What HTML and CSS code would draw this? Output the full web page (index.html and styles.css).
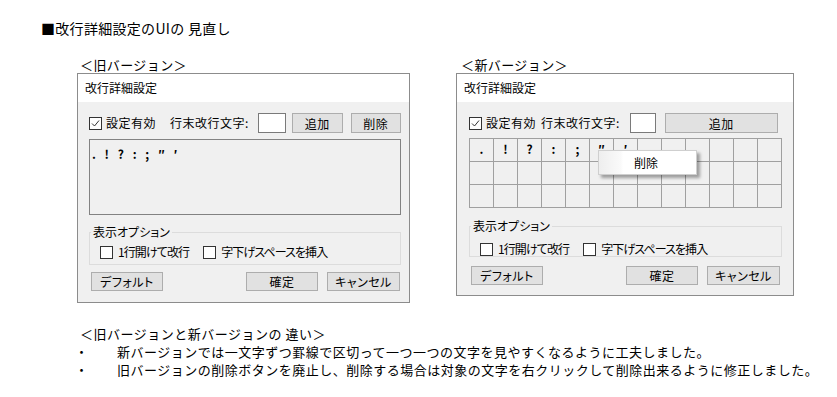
FILE: index.html
```html
<!DOCTYPE html>
<html lang="ja">
<head>
<meta charset="UTF-8" />
<title>改行詳細設定のUIの見直し</title>
<link rel="stylesheet" href="styles.css">
</head>
<body>
<h1 class="page-title">■改行詳細設定のUIの 見直し</h1>

<div class="compare">
  <!-- old version -->
  <section class="version version-old">
    <div class="caption">＜旧バージョン＞</div>
    <div class="dialog">
      <div class="dialog-title">改行詳細設定</div>
      <div class="dialog-body">
        <div class="top-row">
          <span class="check check-main">
            <span class="box"><svg viewBox="0 0 11 11" width="11" height="11"><path d="M2 5.5 L4.5 8 L9 2.5" fill="none" stroke="#333" stroke-width="1"/></svg></span>
            設定有効
          </span>
          <span class="field-label">行末改行文字:</span>
          <span class="input"></span>
          <button class="btn btn-add">追加</button>
          <button class="btn btn-del">削除</button>
        </div>
        <div class="char-area">. ! ? : ; ″ ′</div>
        <fieldset class="group">
          <legend>表示オプション</legend>
          <span class="check"><span class="box"></span>1行開けて改行</span>
          <span class="check check-2"><span class="box"></span>字下げスペースを挿入</span>
        </fieldset>
        <div class="btn-row">
          <button class="btn btn-default">デフォルト</button>
          <button class="btn btn-ok">確定</button>
          <button class="btn btn-cancel">キャンセル</button>
        </div>
      </div>
    </div>
  </section>

  <!-- new version -->
  <section class="version version-new">
    <div class="caption">＜新バージョン＞</div>
    <div class="dialog">
      <div class="dialog-title">改行詳細設定</div>
      <div class="dialog-body">
        <div class="top-row">
          <span class="check check-main">
            <span class="box"><svg viewBox="0 0 11 11" width="11" height="11"><path d="M2 5.5 L4.5 8 L9 2.5" fill="none" stroke="#333" stroke-width="1"/></svg></span>
            設定有効
          </span>
          <span class="field-label">行末改行文字:</span>
          <span class="input"></span>
          <button class="btn btn-add">追加</button>
        </div>
        <div class="char-grid-wrap">
          <div class="char-grid" id="charGrid"></div>
          <div class="context-menu"><span class="menu-item">削除</span></div>
        </div>
        <fieldset class="group">
          <legend>表示オプション</legend>
          <span class="check"><span class="box"></span>1行開けて改行</span>
          <span class="check check-2"><span class="box"></span>字下げスペースを挿入</span>
        </fieldset>
        <div class="btn-row">
          <button class="btn btn-default">デフォルト</button>
          <button class="btn btn-ok">確定</button>
          <button class="btn btn-cancel">キャンセル</button>
        </div>
      </div>
    </div>
  </section>
</div>

<div class="notes">
  <div class="notes-title">＜旧バージョンと新バージョンの 違い＞</div>
  <div class="note"><span class="bullet">・</span>新バージョンでは一文字ずつ罫線で区切って一つ一つの文字を見やすくなるように工夫しました。</div>
  <div class="note"><span class="bullet">・</span>旧バージョンの削除ボタンを廃止し、削除する場合は対象の文字を右クリックして削除出来るように修正しました。</div>
</div>

<script>
  const chars = ['.', '!', '?', ':', ';', '″', '′'];
  const grid = document.getElementById('charGrid');
  for (let i = 0; i < 39; i++) {
    const cell = document.createElement('div');
    cell.className = 'cell';
    cell.textContent = chars[i] || '';
    grid.appendChild(cell);
  }
</script>
</body>
</html>
```

FILE: styles.css
```css
* {
  box-sizing: border-box;
}
body {
  margin: 0;
  font-family: "Noto Sans CJK JP", "Noto Sans", sans-serif;
  color: #000;
  background: #fff;
}
.page-title {
  margin: 0;
  padding: 18px 0 0 41px;
  font-size: 14px;
  font-weight: 400;
  line-height: 20px;
  letter-spacing: 0.3px;
}
.compare {
  display: flex;
  align-items: flex-start;
  gap: 46px;
  margin-top: 19px;
  padding-left: 77px;
}
.caption {
  font-size: 13px;
  line-height: 16px;
  letter-spacing: 0.4px;
  padding-left: 3px;
}
.version-new .caption {
  padding-left: 5px;
}

/* dialog */
.dialog {
  border: 1px solid #8c8c8c;
  background: #f0f0f0;
  font-size: 12px;
  line-height: 16px;
}
.version-old .dialog {
  width: 333px;
}
.version-new .dialog {
  width: 338px;
}
.dialog-title {
  background: #fff;
  height: 28px;
  line-height: 28px;
  padding-left: 7px;
}
.dialog-body {
  padding: 11px 8px 11px 11px;
}
.version-new .dialog-body {
  padding: 11px 11px 10px 12px;
}
.top-row {
  display: flex;
  align-items: center;
  height: 20px;
}
.check {
  display: inline-flex;
  align-items: center;
  gap: 6px;
  letter-spacing: 0.5px;
}
.box {
  width: 13px;
  height: 13px;
  border: 1px solid #333;
  background: #fff;
  display: inline-flex;
  align-items: center;
  justify-content: center;
}
.check-main {
  gap: 4px;
}
.field-label {
  margin-left: 14px;
  letter-spacing: 0.5px;
}
.version-new .field-label {
  margin-left: 5px;
}
.input {
  width: 28px;
  height: 20px;
  margin-left: 9px;
  background: #fff;
  border: 1px solid #7a7a7a;
}
.version-new .input {
  width: 26px;
  margin-left: 10px;
}
.btn {
  height: 20px;
  padding: 0;
  background: #e1e1e1;
  border: 1px solid #adadad;
  font-family: inherit;
  font-size: 12px;
  color: #000;
  letter-spacing: 0.5px;
  font-feature-settings: "palt";
}
.btn-add {
  width: 51px;
  margin-left: 6px;
}
.version-new .btn-add {
  width: 113px;
  margin-left: 9px;
}
.btn-del {
  width: 50px;
  margin-left: 8px;
}

/* old: plain text area */
.char-area {
  margin-top: 6px;
  height: 76px;
  border: 1px solid #828282;
  padding: 6px 0 0 2px;
  font-weight: 700;
  letter-spacing: 1.5px;
  word-spacing: 3px;
}

/* new: one cell per char */
.char-grid-wrap {
  position: relative;
  margin-top: 5px;
}
.char-grid {
  display: grid;
  grid-template-columns: repeat(13, 24px);
  grid-auto-rows: 23px;
  width: 313px;
  border-top: 1px solid #a0a0a0;
  border-left: 1px solid #a0a0a0;
}
.cell {
  border-right: 1px solid #a0a0a0;
  border-bottom: 1px solid #a0a0a0;
  text-align: center;
  line-height: 20px;
  font-weight: 700;
}
.context-menu {
  position: absolute;
  left: 129px;
  top: 12px;
  width: 99px;
  height: 25px;
  background: linear-gradient(to right, #eeeeee 0, #fafafa 22px, #fff 24px);
  border: 1px solid #cfcfcf;
  box-shadow: 3px 3px 3px rgba(0,0,0,0.35);
  padding-left: 35px;
  line-height: 23px;
}

/* group */
.group {
  margin: 9px 0 0;
  padding: 5px 10px 5px;
  border: 1px solid #dcdcdc;
  display: flex;
  align-items: center;
  font-feature-settings: "palt";
}
.version-new .group {
  margin-top: 10px;
  padding: 8px 10px 0;
}
.group legend {
  padding: 0 2px;
  margin-left: -9px;
  line-height: 16px;
}
.group .check {
  height: 14px;
  gap: 5px;
  letter-spacing: -0.9px;
}
.group .check-2 {
  margin-left: 14px;
}
.group .box {
  width: 13px;
  height: 13px;
}

/* bottom buttons */
.btn-row {
  display: flex;
  margin-top: 7px;
  padding: 0 1px 0 2px;
}
.version-new .btn-row {
  margin-top: 9px;
  padding-right: 2px;
}
.btn-default {
  width: 72px;
  height: 19px;
}
.btn-ok {
  width: 72px;
  height: 19px;
  margin-left: auto;
}
.btn-cancel {
  width: 73px;
  height: 19px;
  margin-left: 9px;
}

/* notes */
.notes {
  margin: 22px 0 0 80px;
  font-size: 13px;
  line-height: 18px;
  letter-spacing: 0.5px;
}
.note {
  display: flex;
}
.bullet {
  width: 37px;
  text-indent: -5px;
  flex: none;
}
```
